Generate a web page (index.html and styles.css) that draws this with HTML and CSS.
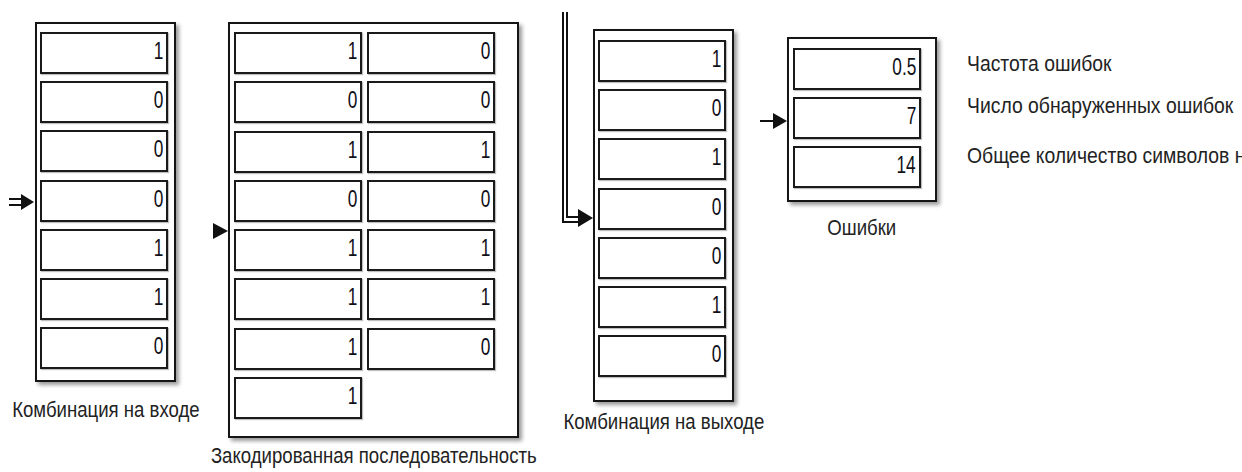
FILE: index.html
```html
<!DOCTYPE html>
<html lang="ru">
<head>
<meta charset="utf-8">
<title>Simulink</title>
<link rel="stylesheet" href="styles.css">
</head>
<body>
<div class="canvas">
  <svg class="wires" width="1242" height="472" viewBox="0 0 1242 472">
    <g fill="none" stroke="#111" stroke-width="2">
      <line x1="9" y1="199" x2="24" y2="199"/>
      <line x1="9" y1="205" x2="24" y2="205"/>
      <polyline points="563,12 563,222 580,222"/>
      <polyline points="567,12 567,217 580,217"/>
      <line x1="760" y1="121" x2="776" y2="121"/>
    </g>
    <g fill="#111">
      <polygon points="21,194 34,202 21,210"/>
      <polygon points="213,223 228,231 213,239"/>
      <polygon points="578,209 593,218 578,227"/>
      <polygon points="773,113 787,121 773,129"/>
    </g>
  </svg>

  <div class="node n-in">
    <div class="block b-in">
      <div class="cell"><span class="v">1</span></div>
      <div class="cell"><span class="v">0</span></div>
      <div class="cell"><span class="v">0</span></div>
      <div class="cell"><span class="v">0</span></div>
      <div class="cell"><span class="v">1</span></div>
      <div class="cell"><span class="v">1</span></div>
      <div class="cell"><span class="v">0</span></div>
    </div>
    <div class="label l-in"><span>Комбинация на входе</span></div>
  </div>

  <div class="node n-enc">
    <div class="block b-enc">
      <div class="cell"><span class="v">1</span></div>
      <div class="cell"><span class="v">0</span></div>
      <div class="cell"><span class="v">0</span></div>
      <div class="cell"><span class="v">0</span></div>
      <div class="cell"><span class="v">1</span></div>
      <div class="cell"><span class="v">1</span></div>
      <div class="cell"><span class="v">0</span></div>
      <div class="cell"><span class="v">0</span></div>
      <div class="cell"><span class="v">1</span></div>
      <div class="cell"><span class="v">1</span></div>
      <div class="cell"><span class="v">1</span></div>
      <div class="cell"><span class="v">1</span></div>
      <div class="cell"><span class="v">1</span></div>
      <div class="cell"><span class="v">0</span></div>
      <div class="cell"><span class="v">1</span></div>
    </div>
    <div class="label l-enc"><span>Закодированная последовательность</span></div>
  </div>

  <div class="node n-out">
    <div class="block b-out">
      <div class="cell"><span class="v">1</span></div>
      <div class="cell"><span class="v">0</span></div>
      <div class="cell"><span class="v">1</span></div>
      <div class="cell"><span class="v">0</span></div>
      <div class="cell"><span class="v">0</span></div>
      <div class="cell"><span class="v">1</span></div>
      <div class="cell"><span class="v">0</span></div>
    </div>
    <div class="label l-out"><span>Комбинация на выходе</span></div>
  </div>

  <div class="node n-err">
    <div class="block b-err">
      <div class="cell"><span class="v">0.5</span></div>
      <div class="cell"><span class="v">7</span></div>
      <div class="cell"><span class="v">14</span></div>
    </div>
    <div class="label l-err"><span>Ошибки</span></div>
  </div>

  <div class="ports">
    <div class="port p1"><span>Частота ошибок</span></div>
    <div class="port p2"><span>Число обнаруженных ошибок</span></div>
    <div class="port p3"><span>Общее количество символов на входе</span></div>
  </div>
</div>
</body>
</html>
```

FILE: styles.css
```css
html, body {
  margin: 0;
  padding: 0;
  background: #ffffff;
}

body {
  width: 1242px;
  height: 472px;
  overflow: hidden;
  font-family: "Liberation Sans", Arial, sans-serif;
  color: #222222;
}

.canvas {
  position: relative;
  width: 1242px;
  height: 472px;
  overflow: hidden;
}

.wires {
  position: absolute;
  left: 0;
  top: 0;
  pointer-events: none;
  z-index: 2;
}

.node {
  position: absolute;
  display: flex;
  flex-direction: column;
  align-items: center;
}

.block {
  box-sizing: border-box;
  border: 2px solid #151515;
  background: #ffffff;
  box-shadow: 3px 3px 4px rgba(0, 0, 0, 0.4);
  display: grid;
  grid-template-columns: 128px;
  grid-auto-rows: 42px;
  align-content: start;
}

.cell {
  box-sizing: border-box;
  border: 2px solid #1a1a1a;
  box-shadow: 1px 1px 1px rgba(0, 0, 0, 0.25);
  display: flex;
  justify-content: flex-end;
  align-items: center;
  padding: 0 3px 4px 0;
}

.v {
  display: inline-block;
  font-size: 24px;
  line-height: 26px;
  color: #101018;
  transform: scaleX(0.72);
  transform-origin: right center;
}

.label {
  white-space: nowrap;
  font-size: 22px;
  line-height: 24px;
}

.label span,
.port span {
  display: inline-block;
  transform: scaleX(0.845);
}

/* Input combination */
.n-in { left: 35px; top: 22px; width: 141px; }
.b-in {
  width: 141px;
  height: 360px;
  padding: 8px 0 0 3px;
  row-gap: 7.2px;
}
.l-in { margin-top: 16px; }

/* Encoded sequence */
.n-enc { left: 228px; top: 22px; width: 291px; }
.b-enc {
  width: 291px;
  height: 416px;
  padding: 8px 0 0 4px;
  grid-template-columns: 128px 128px;
  column-gap: 5px;
  row-gap: 7.3px;
}
.l-enc { margin-top: 6px; }

/* Output combination */
.n-out { left: 593px; top: 29px; width: 141px; }
.b-out {
  width: 141px;
  height: 373px;
  padding: 9px 0 0 3px;
  row-gap: 7.2px;
}
.l-out { margin-top: 8px; }

/* Errors */
.n-err { left: 787px; top: 37px; width: 150px; }
.b-err {
  width: 150px;
  height: 165px;
  padding: 9px 0 0 4px;
  row-gap: 7px;
}
.l-err { margin-top: 14px; }

/* Port labels */
.ports {
  position: absolute;
  left: 967px;
  top: 52px;
  display: flex;
  flex-direction: column;
  align-items: flex-start;
  white-space: nowrap;
  font-size: 22px;
  line-height: 24px;
}

.port span {
  transform: scaleX(0.88);
  transform-origin: left center;
}

.p2 { margin-top: 18px; }
.p3 { margin-top: 26px; }
```
